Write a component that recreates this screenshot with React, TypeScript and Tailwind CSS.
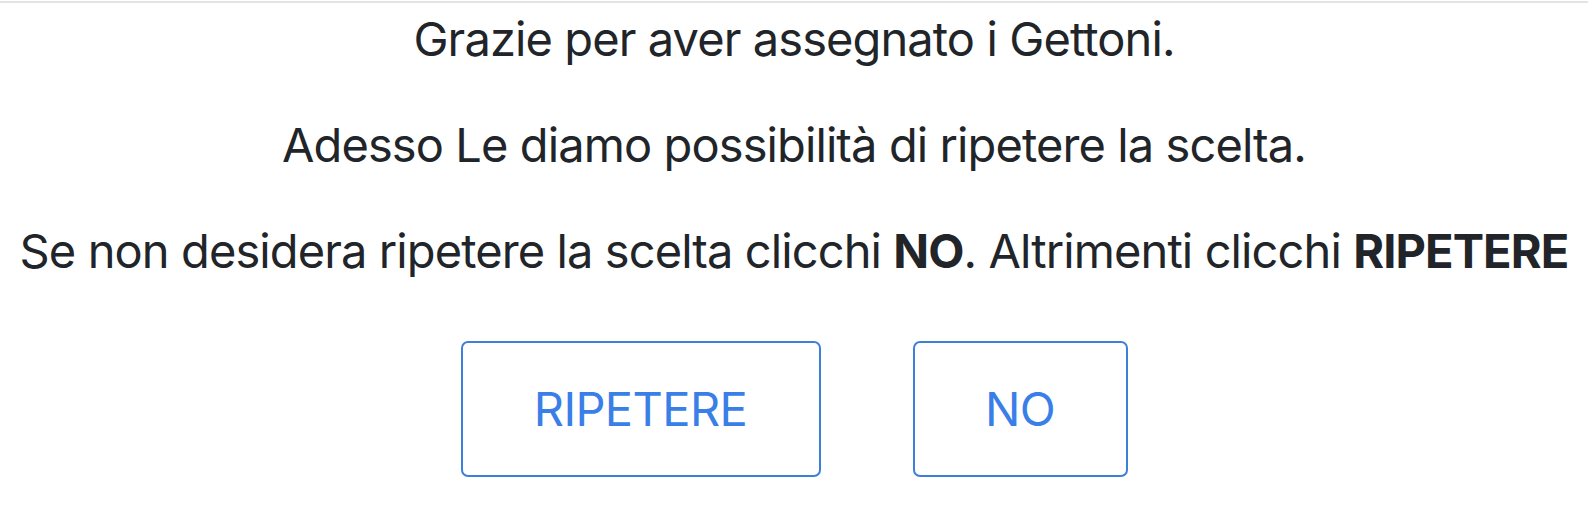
export default function App() {
  return (
    <div className="w-[1588px] h-[506px] bg-white overflow-hidden font-['Inter',sans-serif] text-[#212529]">
      <div className="mt-[1px] h-[2px] bg-[#e2e3e4]" />
      <div className="flex flex-col items-center pt-[7px]">
        <p className="text-[47px] leading-[58px] tracking-[-0.9px] whitespace-nowrap">Grazie per aver assegnato i Gettoni.</p>
        <p className="mt-[48px] text-[47px] leading-[58px] tracking-[-0.9px] whitespace-nowrap">Adesso Le diamo possibilità di ripetere la scelta.</p>
        <p className="mt-[48px] text-[47px] leading-[58px] tracking-[-0.9px] whitespace-nowrap">
          Se non desidera ripetere la scelta clicchi <b className="font-bold">NO</b>. Altrimenti clicchi <b className="font-bold">RIPETERE</b>
        </p>
        <div className="mt-[61px] flex gap-[92px]">
          <button className="w-[360px] h-[136px] rounded-[7px] border-2 border-[#3f7fdc] text-[#3a7ee8] text-[47px] tracking-[-0.6px] bg-white">RIPETERE</button>
          <button className="w-[215px] h-[136px] rounded-[7px] border-2 border-[#3f7fdc] text-[#3a7ee8] text-[47px] tracking-[-0.6px] bg-white">NO</button>
        </div>
      </div>
    </div>
  );
}
